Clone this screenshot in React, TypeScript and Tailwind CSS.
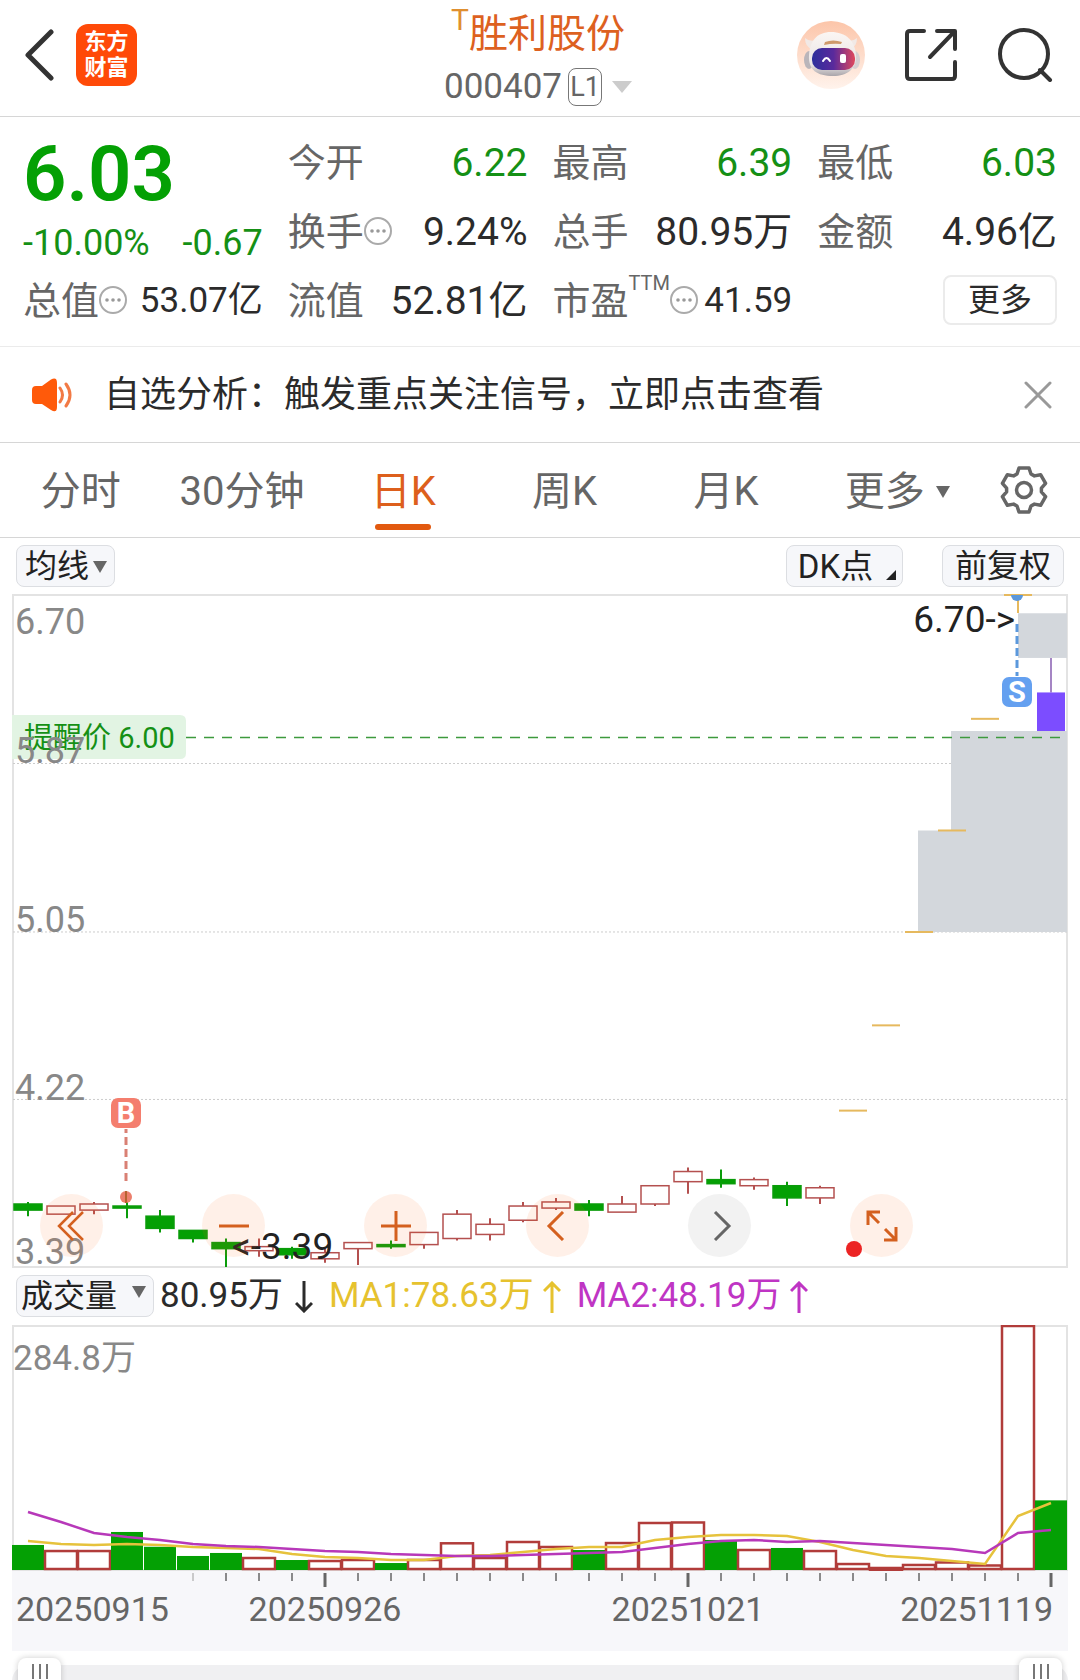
import React, { useState } from 'react';

type Candle = [open: number, close: number, high: number, low: number];

const candles: Candle[] = [
    [3.70, 3.67, 3.71, 3.64],
    [3.65, 3.69, 3.69, 3.65],
    [3.67, 3.70, 3.71, 3.65],
    [3.69, 3.68, 3.75, 3.63],
    [3.64, 3.58, 3.67, 3.56],
    [3.57, 3.53, 3.57, 3.51],
    [3.51, 3.48, 3.53, 3.39],
    [3.47, 3.49, 3.53, 3.44],
    [3.48, 3.45, 3.49, 3.43],
    [3.43, 3.46, 3.48, 3.41],
    [3.48, 3.51, 3.51, 3.40],
    [3.50, 3.49, 3.52, 3.48],
    [3.50, 3.56, 3.56, 3.48],
    [3.53, 3.65, 3.67, 3.52],
    [3.55, 3.60, 3.63, 3.52],
    [3.62, 3.69, 3.71, 3.61],
    [3.68, 3.71, 3.73, 3.67],
    [3.70, 3.67, 3.72, 3.64],
    [3.66, 3.70, 3.74, 3.66],
    [3.70, 3.79, 3.79, 3.69],
    [3.81, 3.86, 3.88, 3.75],
    [3.82, 3.80, 3.87, 3.78],
    [3.79, 3.82, 3.83, 3.77],
    [3.79, 3.73, 3.81, 3.69],
    [3.73, 3.78, 3.79, 3.70],
];

// one-price limit-up days that follow the regular candles
const limitUps = [4.16, 4.58, 5.04, 5.54, 6.09, 6.70];

const volumes = [
    29.1, 23.2, 23.2, 44.2, 27, 16.3, 19.8, 15.1, 11.6, 11.6, 12.8, 8.1, 12.8, 32.2, 15.1, 33.7,
    27.9, 23.2, 32.5, 55.8, 56.4, 34.9, 24.4, 25.6, 23.2, 8.1, 3.5, 7, 9.9, 6.4, 284.8, 80.95,
];

const ma1 = [
    216, 219, 220, 219, 220, 222, 223, 224, 229, 232, 233, 235, 235, 231, 230, 227,
    224, 222, 222, 215, 212, 210, 210, 211, 217, 225, 231, 233, 236, 239, 191, 178,
];
const ma2 = [
    187, 197, 208, 212, 215, 219, 221, 222, 224, 226, 227, 229, 230, 231, 231, 230,
    229, 228, 227, 223, 219, 216, 215, 217, 216, 218, 220, 222, 224, 228, 208, 205,
];

const periods = ['分时', '30分钟', '日K', '周K', '月K'];

const slotX = (i: number) => 16 + i * 33;
const priceY = (p: number) => 1 + (6.7 - p) * 203;
const isGreen = (i: number) => (i < candles.length ? candles[i][1] < candles[i][0] : i === 31);
const toPoints = (ys: number[]) => ys.map((y, i) => `${slotX(i)},${y}`).join(' ');

const gearPath = (() => {
    const tooth = [[-7, -16], [-5, -22], [5, -22], [7, -16]];
    const pts: string[] = [];
    for (let k = 0; k < 6; k++) {
        const a = (k * Math.PI) / 3;
        tooth.forEach(([x, y]) => {
            pts.push(`${(24 + x * Math.cos(a) - y * Math.sin(a)).toFixed(1)} ${(24 + x * Math.sin(a) + y * Math.cos(a)).toFixed(1)}`);
        });
    }
    return `M${pts.join('L')}Z`;
})();

const InfoDots: React.FC = () => (
    <svg viewBox="0 0 28 28" className="mb-1 h-7 w-7 shrink-0">
        <circle cx="14" cy="14" r="13" fill="none" stroke="#aaa" strokeWidth="2" />
        <circle cx="8" cy="14" r="1.8" fill="#999" />
        <circle cx="14" cy="14" r="1.8" fill="#999" />
        <circle cx="20" cy="14" r="1.8" fill="#999" />
    </svg>
);

const RobotAvatar: React.FC = () => (
    <svg viewBox="0 0 68 68" className="w-[68px] h-[68px]">
        <defs>
            <linearGradient id="avatarBg" x1="0" y1="0" x2="0" y2="1">
                <stop offset="0" stopColor="#fcc5a9" />
                <stop offset="1" stopColor="#fff3ec" />
            </linearGradient>
            <linearGradient id="visor" x1="0" y1="0" x2="1" y2="0">
                <stop offset="0" stopColor="#2c2f9c" />
                <stop offset="0.5" stopColor="#5a2a9c" />
                <stop offset="1" stopColor="#e0485c" />
            </linearGradient>
            <linearGradient id="helmet" x1="0" y1="0" x2="0" y2="1">
                <stop offset="0" stopColor="#fbf6f3" />
                <stop offset="0.75" stopColor="#e9e4e4" />
                <stop offset="1" stopColor="#a9a5aa" />
            </linearGradient>
        </defs>
        <circle cx="34" cy="34" r="34" fill="url(#avatarBg)" />
        <path d="M8 17Q8 26 15 28L20 19Q12 21 8 17ZM60 17Q60 26 53 28L48 19Q56 21 60 17Z" fill="#f1e9e6" />
        <ellipse cx="12" cy="39" rx="5" ry="9" fill="#b9b5ba" />
        <ellipse cx="58" cy="39" rx="5" ry="9" fill="#d6cfd1" />
        <path d="M34 11C49 11 58 20 59 34C60 48 50 55 36 55C20 55 11 49 12 34C13 20 20 11 34 11Z" fill="url(#helmet)" />
        <path d="M28 21Q36 18 45 21L44 23Q36 22 27 24Z" fill="#cf9a6b" />
        <rect x="15" y="27" width="43" height="22" rx="10" fill="url(#visor)" />
        <path d="M26 40Q29.500 34 33 40" fill="none" stroke="#fff" strokeWidth="2" strokeLinecap="round" />
        <rect x="43" y="33" width="6" height="9" rx="2" fill="#fff" />
    </svg>
);

const Stat: React.FC<{ label: string; value: string; green?: boolean; small?: boolean; children?: React.ReactNode }> = ({ label, value, green, small, children }) => (
    <div className="flex h-[69px] items-center justify-between whitespace-nowrap">
        <span className="flex items-center text-[38px] text-[#666]">
            {label}
            {children}
        </span>
        <span className={`${small ? 'text-[35px]' : 'text-[39px]'} ${green ? 'text-[#159015]' : 'text-[#2b2b2b]'}`}>{value}</span>
    </div>
);

const Trend: React.FC<{ down?: boolean }> = ({ down }) => (
    <svg viewBox="0 0 18 32" className="h-8 w-[18px]" fill="none" stroke="currentColor" strokeWidth="3">
        <path d={down ? 'M9 0V30M1 22L9 30L17 22' : 'M9 32V2M1 10L9 2L17 10'} />
    </svg>
);

const IndicatorSelect: React.FC<{ label: string; options: string[]; className: string; selectClass: string }> = ({ label, options, className, selectClass }) => (
    <div className={`relative ${className}`}>
        <select aria-label={label} className={`h-[42px] w-full appearance-none rounded-lg border border-[#dcdee2] bg-[#f6f7fa] text-[32px] leading-10 text-[#222] ${selectClass}`}>
            {options.map(o => <option key={o}>{o}</option>)}
        </select>
        <svg viewBox="0 0 14 12" className="pointer-events-none absolute right-2 top-4 h-3 w-[14px]">
            <path d="M0 0H14L7 12Z" fill="#666" />
        </svg>
    </div>
);

const PriceChart: React.FC = () => (
    <svg viewBox="0 0 1056 674" className="block w-full">
        <rect x="1" y="1" width="1054" height="672" fill="#fff" stroke="#e3e3e3" strokeWidth="2" />
        {[5.87, 5.04, 4.215].map(p => (
            <line key={p} x1="1" x2="1055" y1={priceY(p)} y2={priceY(p)} stroke="#ccc" strokeDasharray="2 2" />
        ))}

        {/* unfilled gaps */}
        <g fill="#d3d7dc">
            <rect x={slotX(30)} y={priceY(6.61)} width="49" height={priceY(6.39) - priceY(6.61)} />
            <path d={`M939 ${priceY(6.03)}H1055V${priceY(5.04)}H906V${priceY(5.54)}H939Z`} />
        </g>

        <path d="M0 121H168Q174 121 174 127V159Q174 165 168 165H0Z" fill="#e2f4e3" />
        <line x1="174" x2="1050" y1="143.500" y2="143.500" stroke="#3d9a3d" strokeWidth="1.500" strokeDasharray="10 8" />
        <text x="12" y="154" fontSize="29" fill="#159015">提醒价 6.00</text>

        {candles.map(([open, close, high, low], i) => {
            const x = slotX(i);
            const top = priceY(Math.max(open, close));
            const bottom = priceY(Math.min(open, close));
            const color = close < open ? '#0a9c0a' : '#b4504f';
            return (
                <g key={i} stroke={color} strokeWidth="1.500" fill={close < open ? '#04a004' : 'none'}>
                    <path d={`M${x} ${priceY(high)}V${top}M${x} ${bottom}V${priceY(low)}`} strokeWidth="2" />
                    <rect x={x - 14} y={top} width="28" height={bottom - top} />
                </g>
            );
        })}
        {limitUps.map((p, i) => (
            <line key={p} x1={slotX(i + 25) - 14} x2={slotX(i + 25) + 14} y1={priceY(p)} y2={priceY(p)} stroke="#e6b95e" strokeWidth="2" />
        ))}
        <line x1={slotX(30)} x2={slotX(30)} y1="1" y2="19" stroke="#e6b95e" strokeWidth="2" />
        <line x1={slotX(31)} x2={slotX(31)} y1={priceY(6.39)} y2={priceY(6.22)} stroke="#a585c4" strokeWidth="2" />
        <rect x={slotX(31) - 14} y={priceY(6.22)} width="28" height={priceY(6.03) - priceY(6.22)} fill="#7c4dff" />

        {/* buy / sell markers */}
        <line x1="114" x2="114" y1="535" y2="588" stroke="#d98074" strokeWidth="3" strokeDasharray="8 4" strokeDashoffset="4" />
        <circle cx="114" cy="603" r="6" fill="#ec7f6c" />
        <path d="M114 597V609" stroke="#b5622f" strokeWidth="2" />
        <rect x="99" y="504" width="30" height="30" rx="7" fill="#f47e6e" />
        <text x="114" y="529" textAnchor="middle" fontSize="29" fontWeight="700" fill="#fff">B</text>
        <path d="M999 1A6 6 0 0 0 1011 1Z" fill="#5b98dc" />
        <line x1="1005" x2="1005" y1="30" y2="82" stroke="#5b98dc" strokeWidth="3" strokeDasharray="8 4" />
        <rect x="990" y="83" width="30" height="30" rx="7" fill="#64a0f0" />
        <text x="1005" y="108" textAnchor="middle" fontSize="29" fontWeight="700" fill="#fff">S</text>

        <g fontSize="36" fill="#888">
            <text x="3" y="40">6.70</text>
            <text x="3" y="169">5.87</text>
            <text x="3" y="338">5.05</text>
            <text x="3" y="506">4.22</text>
            <text x="3" y="670">3.39</text>
        </g>
        <g fontSize="37" fill="#222">
            <text x="1003" y="38" textAnchor="end">6.70-&gt;</text>
            <text x="220" y="665">&lt;-3.39</text>
        </g>
    </svg>
);

const VolumeChart: React.FC = () => (
    <svg viewBox="0 0 1056 246" className="block w-full">
        <rect x="1" y="1" width="1054" height="244" fill="#fff" stroke="#e3e3e3" strokeWidth="2" />
        {volumes.map((v, i) => {
            const h = (v / 284.8) * 245;
            return isGreen(i)
                ? <rect key={i} x={i * 33} y={245 - h} width="32" height={h} fill="#04a004" />
                : <rect key={i} x={i * 33} y={246 - h} width="32" height={Math.max(h - 2, 2)} fill="#fff" stroke="#b13c3a" strokeWidth="2.500" />;
        })}
        <polyline points={toPoints(ma1)} fill="none" stroke="#e6c23c" strokeWidth="2.500" />
        <polyline points={toPoints(ma2)} fill="none" stroke="#b738b9" strokeWidth="2.500" />
        <text x="1" y="45" fontSize="35" fill="#888">284.8万</text>
    </svg>
);

const DateAxis: React.FC = () => (
    <svg viewBox="0 0 1056 80" className="block w-full bg-[#f7f7fa]">
        {volumes.map((_, i) => {
            if (i < 5) return null;
            const major = i === 9 || i === 20 || i === 31;
            return <line key={i} x1={slotX(i)} x2={slotX(i)} y1="2" y2={major ? 16 : 10} stroke={i === 5 ? '#bbb' : '#666'} strokeWidth={major ? 3 : 1.5} />;
        })}
        <g fontSize="34" fill="#666">
            <text x="4" y="50">20250915</text>
            <text x="313" y="50" textAnchor="middle">20250926</text>
            <text x="676" y="50" textAnchor="middle">20251021</text>
            <text x="1041" y="50" textAnchor="end">20251119</text>
        </g>
    </svg>
);

const RangeHandle: React.FC<{ label: string; value: number; onChange: (v: number) => void }> = ({ label, value, onChange }) => (
    <input
        type="range"
        aria-label={label}
        value={value}
        onChange={e => onChange(Number(e.target.value))}
        className="pointer-events-none absolute inset-x-[6px] top-[7px] h-11 appearance-none bg-transparent [&::-webkit-slider-thumb]:pointer-events-auto [&::-webkit-slider-thumb]:h-11 [&::-webkit-slider-thumb]:w-[43px] [&::-webkit-slider-thumb]:appearance-none [&::-webkit-slider-thumb]:rounded-lg [&::-webkit-slider-thumb]:bg-white [&::-webkit-slider-thumb]:bg-[image:linear-gradient(90deg,#fff_14px,#777_14px,#777_16px,#fff_16px,#fff_21px,#777_21px,#777_23px,#fff_23px,#fff_28px,#777_28px,#777_30px,#fff_30px)] [&::-webkit-slider-thumb]:bg-[length:43px_15px] [&::-webkit-slider-thumb]:bg-[position:0_6px] [&::-webkit-slider-thumb]:bg-no-repeat [&::-webkit-slider-thumb]:shadow-[0_0_6px_rgba(0,0,0,0.2)]"
    />
);

const roundButton = 'flex h-[63px] w-[63px] items-center justify-center rounded-full';

const App: React.FC = () => {
    const [period, setPeriod] = useState('日K');
    const [start, setStart] = useState(0);
    const [end, setEnd] = useState(100);

    return (
        <div className="min-h-screen w-full overflow-hidden bg-white font-[Roboto,'Noto_Sans_CJK_SC',sans-serif] text-[#2b2b2b]">
            <header className="grid h-[117px] grid-cols-[1fr_auto_1fr] items-center border-b border-[#d6d6d6]">
                <div className="flex items-center gap-[22px] pb-[6px] pl-6">
                    <button aria-label="返回">
                        <svg viewBox="0 0 30 54" className="h-[54px] w-[30px]" fill="none" stroke="#333" strokeWidth="5" strokeLinecap="round" strokeLinejoin="round">
                            <path d="M27 4L4 27L27 50" />
                        </svg>
                    </button>
                    <div className="flex h-[62px] w-[61px] flex-col items-center justify-center rounded-xl bg-[#ff4a08] text-[22px] font-bold leading-[26px] text-white">
                        <span>东方</span>
                        <span>财富</span>
                    </div>
                </div>
                <div className="flex flex-col items-center pr-1 pt-1">
                    <h1 className="flex text-[39px] leading-[54px] text-[#dd611f]">
                        <span className="text-[30px] leading-[26px] text-[#df8f30]">T</span>
                        胜利股份
                    </h1>
                    <button className="flex h-[52px] items-center text-[35px] leading-[44px] text-[#666]">
                        000407
                        <span className="ml-[6px] flex h-[38px] w-[34px] items-center justify-center rounded-lg border border-[#777] text-[27px]">L1</span>
                        <svg viewBox="0 0 20 12" className="ml-[10px] h-3 w-5"><path d="M0 0H20L10 12Z" fill="#ccc" /></svg>
                    </button>
                </div>
                <div className="flex items-center justify-end gap-[39px] pb-[6px] pr-[27px]">
                    <button aria-label="智能助手"><RobotAvatar /></button>
                    <button aria-label="分享">
                        <svg viewBox="0 0 54 54" className="h-[54px] w-[54px]" fill="none" stroke="#333" strokeWidth="4" strokeLinecap="round" strokeLinejoin="round">
                            <path d="M20 3H6Q3 3 3 6V48Q3 51 6 51H48Q51 51 51 48V34M33 3H51V21M26 29L50 4" />
                        </svg>
                    </button>
                    <button aria-label="搜索">
                        <svg viewBox="0 0 56 54" className="h-[54px] w-14" fill="none" stroke="#333" strokeWidth="4" strokeLinecap="round">
                            <path d="M43 42L53 52" />
                            <circle cx="27" cy="26" r="24" />
                        </svg>
                    </button>
                </div>
            </header>

            <section className="grid grid-cols-4 gap-x-[25px] border-b border-[#ebebeb] px-[23px] pb-[10px] pt-3">
                <div>
                    <div className="flex h-[90px] items-center text-[76px] font-semibold leading-none text-[#04a004]">6.03</div>
                    <div className="flex h-12 items-center justify-between text-[36px] text-[#159015]">
                        <span>-10.00%</span>
                        <span>-0.67</span>
                    </div>
                    <Stat label="总值" value="53.07亿" small><InfoDots /></Stat>
                </div>
                <div>
                    <Stat label="今开" value="6.22" green />
                    <Stat label="换手" value="9.24%"><InfoDots /></Stat>
                    <Stat label="流值" value="52.81亿" />
                </div>
                <div>
                    <Stat label="最高" value="6.39" green />
                    <Stat label="总手" value="80.95万" />
                    <Stat label="市盈" value="41.59" small>
                        <span className="self-start text-[20px] leading-5">TTM</span>
                        <InfoDots />
                    </Stat>
                </div>
                <div>
                    <Stat label="最低" value="6.03" green />
                    <Stat label="金额" value="4.96亿" />
                    <div className="flex h-[66px] items-center justify-end">
                        <button className="h-[50px] w-[114px] rounded-lg border-2 border-[#ebebeb] text-[32px] leading-none">更多</button>
                    </div>
                </div>
            </section>

            <section className="flex h-24 items-center border-b border-[#d6d6d6] pl-8 pr-7">
                <svg viewBox="0 0 40 34" className="h-[34px] w-10">
                    <path d="M4 8H10L19 1.500Q25 -1.500 25 5V29Q25 35.500 19 32L10 26H4Q0 26 0 22V12Q0 8 4 8Z" fill="#ff5a0a" />
                    <path d="M28 10Q33 17 28 24M34 6Q42 17 34 28" fill="none" stroke="#f27a45" strokeWidth="3" strokeLinecap="round" />
                </svg>
                <a href="#analysis" className="ml-8 flex-1 text-[36px]">自选分析：触发重点关注信号，立即点击查看</a>
                <button aria-label="关闭">
                    <svg viewBox="0 0 28 28" className="h-7 w-7" stroke="#999" strokeWidth="3" strokeLinecap="round">
                        <path d="M2 2L26 26M26 2L2 26" />
                    </svg>
                </button>
            </section>

            <nav className="flex h-[95px] border-b border-[#d6d6d6] text-[40px] text-[#666]">
                {periods.map(p => (
                    <button key={p} onClick={() => setPeriod(p)} className={`relative flex-1 pt-1 ${p === period ? 'text-[#dd5f1c]' : ''}`}>
                        {p}
                        {p === period && <span className="absolute bottom-[7px] left-1/2 h-[6px] w-14 -translate-x-1/2 rounded-full bg-[#e2590f]" />}
                    </button>
                ))}
                <button className="flex-1 pt-1">
                    <span className="flex items-center justify-center gap-[11px] pl-5">
                        更多
                        <svg viewBox="0 0 14 12" className="h-3 w-[14px]"><path d="M0 0H14L7 12Z" fill="#666" /></svg>
                    </span>
                </button>
                <button aria-label="设置" className="flex w-28 items-center justify-center">
                    <svg viewBox="0 0 48 48" className="h-12 w-12" fill="none" stroke="#666" strokeWidth="3.500" strokeLinejoin="round">
                        <path d={gearPath} />
                        <circle cx="24" cy="24" r="7.500" />
                    </svg>
                </button>
            </nav>

            <div className="flex h-14 items-center gap-[39px] px-4">
                <IndicatorSelect label="主图指标" options={['均线', '布林']} className="mr-auto w-[99px]" selectClass="pl-2" />
                <button className="relative h-[42px] w-[117px] rounded-lg border border-[#dcdee2] bg-[#f6f7fa] pr-[18px] text-[33px] leading-none text-[#222]">
                    DK点
                    <svg viewBox="0 0 10 10" className="absolute bottom-[6px] right-[6px] h-[10px] w-[10px]"><path d="M10 0V10H0Z" fill="#222" /></svg>
                </button>
                <button className="h-[42px] w-[122px] rounded-lg border border-[#dcdee2] bg-[#f6f7fa] text-[32px] leading-none text-[#222]">前复权</button>
            </div>

            <div className="relative mx-3">
                <PriceChart />
                <div className="absolute bottom-[11px] left-7 flex gap-[99px] text-[#d4601f]">
                    <button aria-label="最早" className={`${roundButton} bg-[#ff6a1f]/10`}>
                        <svg viewBox="0 0 30 30" className="h-[30px] w-[30px]" fill="none" stroke="currentColor" strokeWidth="2.500">
                            <path d="M16 1L2 15L16 29M26 1L12 15L26 29" />
                        </svg>
                    </button>
                    <button aria-label="缩小" className={`${roundButton} bg-[#ff6a1f]/10`}>
                        <svg viewBox="0 0 30 30" className="h-[30px] w-[30px]" stroke="currentColor" strokeWidth="3"><path d="M0 15H30" /></svg>
                    </button>
                    <button aria-label="放大" className={`${roundButton} bg-[#ff6a1f]/10`}>
                        <svg viewBox="0 0 30 30" className="h-[30px] w-[30px]" stroke="currentColor" strokeWidth="3"><path d="M0 15H30M15 0V30" /></svg>
                    </button>
                    <button aria-label="左移" className={`${roundButton} bg-[#ff6a1f]/10`}>
                        <svg viewBox="0 0 30 30" className="h-[30px] w-[30px]" fill="none" stroke="currentColor" strokeWidth="3"><path d="M20 1L6 15L20 29" /></svg>
                    </button>
                    <button aria-label="右移" className={`${roundButton} bg-[#f2f2f2] text-[#666]`}>
                        <svg viewBox="0 0 30 30" className="h-[30px] w-[30px]" fill="none" stroke="currentColor" strokeWidth="3"><path d="M10 1L24 15L10 29" /></svg>
                    </button>
                    <button aria-label="全屏" className={`${roundButton} relative bg-[#ff6a1f]/10`}>
                        <svg viewBox="0 0 32 32" className="h-8 w-8" fill="none" stroke="currentColor" strokeWidth="3">
                            <path d="M2 15V2H14M2 2L13 13M30 17V30H18M30 30L19 19" />
                        </svg>
                        <span className="absolute -left-1 bottom-0 h-4 w-4 rounded-full bg-[#ec2424]" />
                    </button>
                </div>
            </div>

            <div className="flex h-[57px] items-center whitespace-nowrap px-4 text-[35px]">
                <IndicatorSelect label="副图指标" options={['成交量', 'MACD']} className="w-[138px]" selectClass="pl-1" />
                <span className="ml-[6px] mr-3">80.95万</span>
                <Trend down />
                <span className="ml-4 flex items-center gap-[9px] text-[#e6c22e]">MA1:78.63万<Trend /></span>
                <span className="ml-4 flex items-center gap-[9px] text-[#bf35c4]">MA2:48.19万<Trend /></span>
            </div>

            <div className="mx-3">
                <VolumeChart />
                <DateAxis />
                <div className="relative h-[29px] overflow-hidden">
                    <div className="mt-[14px] h-8 rounded-full bg-[#f0f0f2]" />
                    <RangeHandle label="起始日期" value={start} onChange={setStart} />
                    <RangeHandle label="结束日期" value={end} onChange={setEnd} />
                </div>
            </div>
        </div>
    );
};

export default App;
